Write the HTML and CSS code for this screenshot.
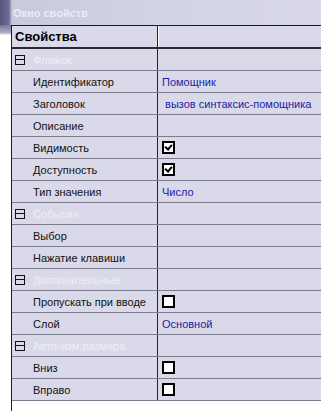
FILE: index.html
```html
<!DOCTYPE html>
<html lang="ru">
<head>
    <meta charset="UTF-8">
    <meta name="viewport" content="width=device-width, initial-scale=1.0">
    <title>Окно свойств</title>
    <link rel="stylesheet" href="styles.css">
</head>
<body>
    <div class="window">
        <div class="titlebar">Окно свойств</div>
        <div class="panel">
            <div class="side"></div>
            <div class="grid-wrap">
                <table class="props">
                    <tr class="head">
                        <th class="name">Свойства</th>
                        <th class="value"></th>
                    </tr>
                    <tr class="group">
                        <td class="name"><span class="toggle"></span>Флажок</td>
                        <td class="value"></td>
                    </tr>
                    <tr>
                        <td class="name">Идентификатор</td>
                        <td class="value">Помощник</td>
                    </tr>
                    <tr>
                        <td class="name">Заголовок</td>
                        <td class="value">&nbsp;вызов синтаксис-помощника</td>
                    </tr>
                    <tr>
                        <td class="name">Описание</td>
                        <td class="value"></td>
                    </tr>
                    <tr>
                        <td class="name">Видимость</td>
                        <td class="value"><span class="check checked"></span></td>
                    </tr>
                    <tr>
                        <td class="name">Доступность</td>
                        <td class="value"><span class="check checked"></span></td>
                    </tr>
                    <tr>
                        <td class="name">Тип значения</td>
                        <td class="value">Число</td>
                    </tr>
                    <tr class="group">
                        <td class="name"><span class="toggle"></span>События</td>
                        <td class="value"></td>
                    </tr>
                    <tr>
                        <td class="name">Выбор</td>
                        <td class="value"></td>
                    </tr>
                    <tr>
                        <td class="name">Нажатие клавиши</td>
                        <td class="value"></td>
                    </tr>
                    <tr class="group">
                        <td class="name"><span class="toggle"></span>Дополнительные</td>
                        <td class="value"></td>
                    </tr>
                    <tr>
                        <td class="name">Пропускать при вводе</td>
                        <td class="value"><span class="check"></span></td>
                    </tr>
                    <tr>
                        <td class="name">Слой</td>
                        <td class="value">Основной</td>
                    </tr>
                    <tr class="group">
                        <td class="name"><span class="toggle"></span>Авто-изм.размера</td>
                        <td class="value"></td>
                    </tr>
                    <tr>
                        <td class="name">Вниз</td>
                        <td class="value"><span class="check"></span></td>
                    </tr>
                    <tr>
                        <td class="name">Вправо</td>
                        <td class="value"><span class="check"></span></td>
                    </tr>
                </table>
            </div>
        </div>
    </div>
</body>
</html>
```

FILE: styles.css
```css
body {
    margin: 0;
    background: #fff;
    font-family: "Liberation Sans", Arial, sans-serif;
    font-size: 11px;
    color: #111;
}
.window {
    width: 321px;
    height: 411px;
    overflow: hidden;
}
.titlebar {
    height: 25px;
    line-height: 27px;
    padding-left: 13px;
    font-weight: bold;
    color: #ececf6;
    background:
        linear-gradient(to right, #55557e 0, #6e6e96 9px, #c9c9dd 12px, #d3d3e6 50%, #d8d8ea 100%);
}
.panel {
    display: flex;
}
.side {
    width: 12px;
    flex: none;
    background: linear-gradient(to bottom, #76769c 0, #b0b0c8 8px, #fff 10px);
}
.grid-wrap {
    flex: 1;
    border-left: 1px solid #1a1a2a;
    margin-left: -1px;
    min-height: 386px;
}
.props {
    border-collapse: collapse;
    width: 320px;
    table-layout: fixed;
    background: #d9d9e9;
}
.props td, .props th {
    height: 21px;
    padding: 0;
    border-bottom: 1px solid #7c7c8c;
    white-space: nowrap;
    overflow: hidden;
}
.props .name {
    width: 124px;
    padding-left: 21px;
    border-right: 1px solid #22222e;
}
.props .value {
    padding-left: 4px;
    color: #1c1ca6;
}
.head th {
    height: 21px;
    border-top: 1px solid #1a1a26;
    border-bottom: 2px solid #2a2a36;
    font-size: 13px;
    font-weight: bold;
    text-align: left;
    color: #000;
}
.head .name {
    padding-left: 3px;
    width: 142px;
}
.head .value {
    box-shadow: inset 1px 0 0 #fff;
}
.group .name {
    padding-left: 3px;
    color: #eeeef8;
}
.toggle {
    display: inline-block;
    position: relative;
    width: 8px;
    height: 8px;
    border: 1px solid #111;
    margin-right: 8px;
    vertical-align: -1px;
}
.toggle::after {
    content: "";
    position: absolute;
    left: 0;
    right: 0;
    top: 3px;
    height: 1px;
    background: #111;
}
.check {
    display: inline-block;
    position: relative;
    width: 9px;
    height: 9px;
    border: 2px solid #000;
    background: #fff;
    vertical-align: middle;
}
.checked::after {
    content: "";
    position: absolute;
    left: 2px;
    top: 0;
    width: 3px;
    height: 5px;
    border: solid #000;
    border-width: 0 2px 2px 0;
    transform: rotate(40deg);
}
```
